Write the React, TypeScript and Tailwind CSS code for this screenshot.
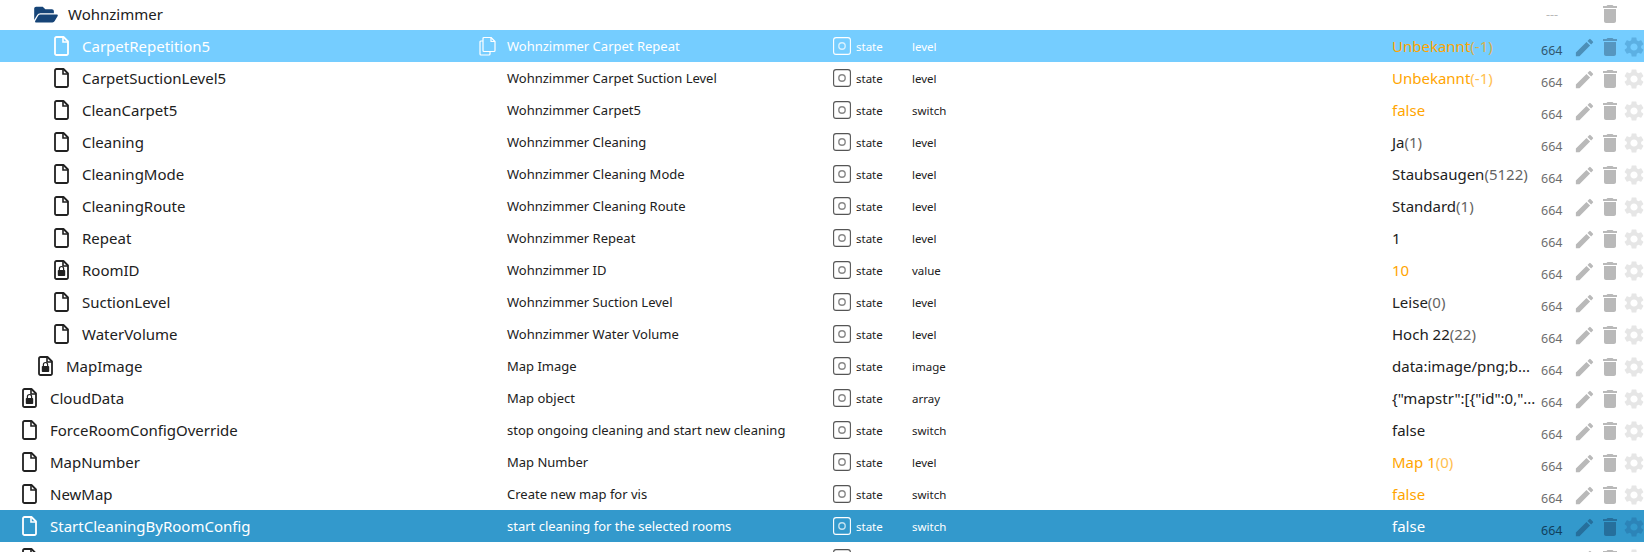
import React from "react";
import { FaFolderOpen } from "react-icons/fa";
import { MdEdit, MdDelete, MdSettings } from "react-icons/md";

type Row = { level: number; name: string; desc?: string; role?: string; val?: string; paren?: string; orange?: boolean; lock?: boolean; sel?: "light" | "dark"; folder?: boolean };

const rows: Row[] = [
  { level: 2, folder: true, name: "Wohnzimmer" },
  { level: 3, name: "CarpetRepetition5", desc: "Wohnzimmer Carpet Repeat", role: "level", val: "Unbekannt", paren: "(-1)", orange: true, sel: "light" },
  { level: 3, name: "CarpetSuctionLevel5", desc: "Wohnzimmer Carpet Suction Level", role: "level", val: "Unbekannt", paren: "(-1)", orange: true },
  { level: 3, name: "CleanCarpet5", desc: "Wohnzimmer Carpet5", role: "switch", val: "false", orange: true },
  { level: 3, name: "Cleaning", desc: "Wohnzimmer Cleaning", role: "level", val: "Ja", paren: "(1)" },
  { level: 3, name: "CleaningMode", desc: "Wohnzimmer Cleaning Mode", role: "level", val: "Staubsaugen", paren: "(5122)" },
  { level: 3, name: "CleaningRoute", desc: "Wohnzimmer Cleaning Route", role: "level", val: "Standard", paren: "(1)" },
  { level: 3, name: "Repeat", desc: "Wohnzimmer Repeat", role: "level", val: "1" },
  { level: 3, name: "RoomID", desc: "Wohnzimmer ID", role: "value", val: "10", orange: true, lock: true },
  { level: 3, name: "SuctionLevel", desc: "Wohnzimmer Suction Level", role: "level", val: "Leise", paren: "(0)" },
  { level: 3, name: "WaterVolume", desc: "Wohnzimmer Water Volume", role: "level", val: "Hoch 22", paren: "(22)" },
  { level: 1, name: "MapImage", desc: "Map Image", role: "image", val: "data:image/png;b...", lock: true },
  { level: 0, name: "CloudData", desc: "Map object", role: "array", val: '{"mapstr":[{"id":0,"...', lock: true },
  { level: 0, name: "ForceRoomConfigOverride", desc: "stop ongoing cleaning and start new cleaning", role: "switch", val: "false" },
  { level: 0, name: "MapNumber", desc: "Map Number", role: "level", val: "Map 1", paren: "(0)", orange: true },
  { level: 0, name: "NewMap", desc: "Create new map for vis", role: "switch", val: "false", orange: true },
  { level: 0, name: "StartCleaningByRoomConfig", desc: "start cleaning for the selected rooms", role: "switch", val: "false", sel: "dark" },
  { level: 0, name: "", lock: true },
];

const iconLeft = ["pl-[22px]", "pl-[38px]", "pl-[34px]", "pl-[54px]"];
const nameGap = ["w-[13px]", "w-[13px]", "w-[10px]", "w-[13px]"];

function FileIcon({ lock }: { lock?: boolean }) {
  return (
    <svg width="15" height="20" viewBox="0 0 15 20" className="block shrink-0" fill="none">
      <path d="M2.500 1H9.500L14 5.500V17.500A1.500 1.500 0 0 1 12.500 19H2.500A1.500 1.500 0 0 1 1 17.500V2.500A1.500 1.500 0 0 1 2.500 1Z" stroke="currentColor" strokeWidth="1.800" strokeLinejoin="round" />
      <path d="M9 1V6H14" stroke="currentColor" strokeWidth="1.600" />
      {lock && (
        <>
          <rect x="3.800" y="10" width="7.400" height="6" rx="0.800" fill="currentColor" />
          <path d="M5.400 10V8.600a2.100 2.100 0 0 1 4.200 0V10" stroke="currentColor" strokeWidth="1.200" />
        </>
      )}
    </svg>
  );
}

function StateIcon() {
  return (
    <svg width="18" height="18" viewBox="0 0 18 18" className="block shrink-0" fill="none">
      <rect x="0.600" y="0.600" width="16.800" height="16.800" rx="2.500" stroke="currentColor" strokeWidth="1.100" />
      <circle cx="9" cy="9" r="3.200" stroke="currentColor" strokeWidth="1.400" opacity="0.700" />
    </svg>
  );
}

function CopyIcon() {
  return (
    <svg width="17" height="20" viewBox="0 0 17 20" fill="none" stroke="currentColor" strokeWidth="1.200" strokeLinejoin="round" className="block">
      <path d="M5 1.500h7l4 4v9a1 1 0 0 1-1 1H5a1 1 0 0 1-1-1v-12a1 1 0 0 1 1-1Z" />
      <path d="M12 1.500v4h4" />
      <path d="M4 5H2a1 1 0 0 0-1 1v12a1 1 0 0 0 1 1h8a1 1 0 0 0 1-1v-2.500" />
    </svg>
  );
}

function RowView({ r }: { r: Row }) {
  const light = r.sel === "light";
  const dark = r.sel === "dark";
  const sel = light || dark;
  const empty = r.name === "";
  const bg = light ? "bg-[#75cdff]" : dark ? "bg-[#3399cc]" : "bg-white";
  const text = sel ? "text-white" : "text-[#212121]";
  const pencil = light ? "text-[#4c8fb8]" : dark ? "text-[#266f9c]" : "text-[#b9b9b9]";
  const trash = light ? "text-[#5696bf]" : dark ? "text-[#266f9c]" : "text-[#b9b9b9]";
  const gear = light ? "text-[#5cb0e3]" : dark ? "text-[#2c84b8]" : "text-[#e6e6e6]";
  const num = light ? "text-[#31566e]" : dark ? "text-[#123f5c]" : "text-[#6e6e6e]";
  return (
    <div className={`flex h-[32px] items-center shrink-0 ${bg} ${text} font-['Noto_Sans',sans-serif]`}>
      <div className={`flex items-center w-[479px] shrink-0 ${iconLeft[r.level]}`}>
        {r.folder ? (
          <FaFolderOpen className="w-[24px] h-[21px] text-[#164477] shrink-0" />
        ) : (
          <FileIcon lock={r.lock} />
        )}
        <div className={`${nameGap[r.level]} shrink-0`} />
        <span className="text-[15px] whitespace-nowrap">{r.name}</span>
      </div>
      <div className="w-[28px] shrink-0">{light && <CopyIcon />}</div>
      {!r.folder ? (
        <>
          <div className="w-[326px] shrink-0 text-[13px] whitespace-nowrap pt-[2px]">{r.desc}</div>
          <div className="flex items-center w-[79px] shrink-0 gap-[4px] text-[11.500px]">
            <span className={sel ? "text-white" : "text-[#555555]"}><StateIcon /></span>
            {!empty && <span className="leading-none pt-[1px] ml-[1px]">state</span>}
          </div>
          <div className="w-[480px] shrink-0 text-[11.500px] leading-none pt-[1px]">{r.role}</div>
          <div className={`w-[149px] shrink-0 text-[15px] whitespace-nowrap ${r.orange ? "text-[#ffa500]" : ""}`}>
            {r.val}
            {r.paren && <span className="opacity-70">{r.paren}</span>}
          </div>
          <div className={`w-[32px] shrink-0 text-[12.500px] pt-[10px] ${num}`}>{empty ? "" : "664"}</div>
          <MdEdit className={`w-[23px] h-[23px] shrink-0 mt-[2px] ${pencil}`} />
          <div className="w-[2px] shrink-0" />
          <MdDelete className={`w-[24px] h-[24px] shrink-0 mt-[1px] ${trash}`} />
          <MdSettings className={`w-[24px] h-[24px] shrink-0 mt-[1px] ${gear}`} />
        </>
      ) : (
        <>
          <div className="grow" />
          <div className="w-[52px] shrink-0 text-[12.500px] text-[#b9b9b9] pt-[2px]">---</div>
          <MdDelete className="w-[24px] h-[24px] shrink-0 text-[#b9b9b9] mr-[22px]" />
        </>
      )}
    </div>
  );
}

export default function App() {
  return (
    <div className="h-[552px] w-[1644px] overflow-hidden bg-white flex flex-col">
      <div className="flex flex-col -mt-[2px]">
        {rows.map((r, i) => (
          <RowView key={i} r={r} />
        ))}
      </div>
    </div>
  );
}
